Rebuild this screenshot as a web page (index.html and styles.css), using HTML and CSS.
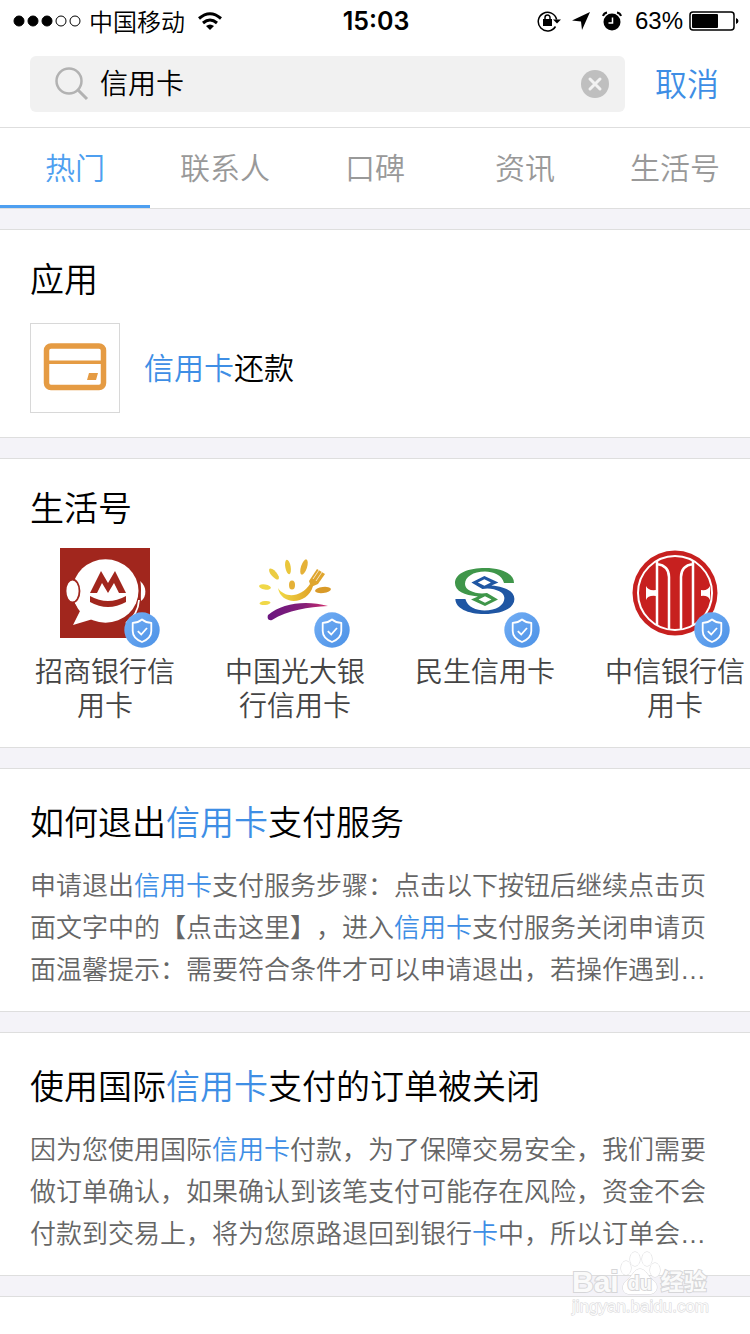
FILE: index.html
```html
<!DOCTYPE html>
<html lang="zh-CN">
<head>
<meta charset="utf-8">
<meta name="viewport" content="width=device-width">
<title>信用卡</title>
<link rel="stylesheet" href="styles.css">
</head>
<body>
<svg class="defs" aria-hidden="true">
  <defs>
    <linearGradient id="blue" x1="0" y1="0" x2="1" y2="1"><stop offset="0" stop-color="#72aef5"/><stop offset="1" stop-color="#4d92e6"/></linearGradient>
    <symbol id="shield" viewBox="0 0 36 36">
      <circle cx="18" cy="18" r="17.7" fill="url(#blue)"/>
      <path d="M18 7.5C21 10 24 10.8 27.3 10.8V19C27.3 24.500 23 28 18 30C13 28 8.700 24.500 8.700 19V10.800C12 10.800 15 10 18 7.500Z" fill="none" stroke="#fff" stroke-width="1.800" stroke-linejoin="round"/>
      <path d="M13.800 19.200L17.200 22.500L23 16" fill="none" stroke="#fff" stroke-width="1.800"/>
    </symbol>
  </defs>
</svg>

<header class="status">
  <div class="status-side">
    <svg width="68" height="12" viewBox="0 0 68 12"><g stroke="#000"><circle cx="6" cy="6" r="5"/><circle cx="20" cy="6" r="5"/><circle cx="34" cy="6" r="5"/><circle cx="48" cy="6" r="5" fill="none"/><circle cx="62" cy="6" r="5" fill="none"/></g></svg>
    <span class="carrier">中国移动</span>
    <svg class="wifi" width="26" height="20" viewBox="0 0 26 20"><g fill="none" stroke="#000" stroke-width="3"><path d="M2 7.500Q13-2 24 7.500"/><path d="M6 12Q13 6 20 12"/></g><path d="M9 15Q13 12 17 15L13 19Z"/></svg>
  </div>
  <time class="clock">15:03</time>
  <div class="status-side status-right">
    <svg width="24" height="22" viewBox="0 0 24 22"><path d="M18.500 16.500A9.300 9.300 0 1 1 19.600 9.500" fill="none" stroke="#000" stroke-width="1.500"/><path d="M16 9.500H24L20 13.500Z"/><rect x="6" y="9" width="9" height="7"/><path d="M8 9V7.500a2.500 2.500 0 0 1 5 0V9" fill="none" stroke="#000" stroke-width="1.500"/></svg>
    <svg class="arrow" width="20" height="20" viewBox="0 0 20 20"><path d="M19 1L1 9.500L10 10.500L11 19Z"/></svg>
    <svg class="alarm" width="20" height="20" viewBox="0 0 20 20"><circle cx="10" cy="11" r="8.500"/><path d="M1 5Q2 2 5 1.500M19 5Q18 2 15 1.500" fill="none" stroke="#000" stroke-width="2"/><path d="M10.500 6.500V12H6.500" fill="none" stroke="#fff" stroke-width="1.500"/></svg>
    <span class="percent">63%</span>
    <svg width="50" height="20" viewBox="0 0 50 20"><rect x="1" y="1" width="44" height="18" rx="3" fill="none" stroke="#000" stroke-width="1.500"/><rect x="3" y="3" width="26" height="14" rx="1"/><path d="M47 7Q49.500 8 49.500 10T47 13Z"/></svg>
  </div>
</header>

<form class="search">
  <div class="search-box">
    <svg width="34" height="34" viewBox="0 0 34 34" fill="none" stroke="#b2b2b2"><circle cx="14" cy="14" r="12.500" stroke-width="2.500"/><path d="M23 23L32 32" stroke-width="3"/></svg>
    <input class="search-input" type="text" value="信用卡" aria-label="搜索">
    <button class="clear" type="button" aria-label="清除"><svg width="28" height="28" viewBox="0 0 28 28"><circle cx="14" cy="14" r="14" fill="#bfbfbf"/><path d="M9 9L19 19M19 9L9 19" stroke="#f2f2f2" stroke-width="3" stroke-linecap="round"/></svg></button>
  </div>
  <button class="cancel" type="button">取消</button>
</form>

<nav class="tabs">
  <button class="tab active" type="button">热门</button>
  <button class="tab" type="button">联系人</button>
  <button class="tab" type="button">口碑</button>
  <button class="tab" type="button">资讯</button>
  <button class="tab" type="button">生活号</button>
</nav>

<main class="results">
  <section class="card">
    <h2 class="card-title">应用</h2>
    <a class="app" href="#">
      <span class="app-icon"><svg width="88" height="88" viewBox="0 0 88 88"><rect x="15.500" y="22" width="57" height="41.500" rx="4.500" fill="none" stroke="#e59b43" stroke-width="5.500"/><path d="M15 38.200H73" stroke="#e59b43" stroke-width="3.500"/><path d="M58 49H67L65 56H56Z" fill="#e59b43"/></svg></span>
      <span class="app-name"><mark>信用卡</mark>还款</span>
    </a>
  </section>

  <section class="card accounts-card">
    <h2 class="card-title">生活号</h2>
    <div class="accounts">
      <a class="account" href="#">
        <span class="logo">
          <svg width="90" height="90" viewBox="0 0 90 90"><path fill="#a1261d" d="M0 0H90V90H0Z"/><g fill="#fff"><ellipse cx="45.500" cy="43" rx="33" ry="31.700"/><path d="M14 53L20 63L13 77L33 71Z"/><path d="M80 33C87 38 87 49 81 53Z"/></g><path d="M78.500 29Q82 43 78 54" fill="none" stroke="#a1261d" stroke-width="1.800"/><path d="M79 52Q78 67 66 75" fill="none" stroke="#fff" stroke-width="1.800"/><ellipse cx="12.500" cy="43" rx="7" ry="11.500" fill="#fff" stroke="#a1261d" stroke-width="1.800"/><path fill="#a1261d" d="M30 45L41 23L48 35L55 23L66 45H59L54 35L48 45L42 35L37 45ZM30 48Q48 58 66 48V54Q48 64 30 54Z"/></svg>
          <svg class="badge" width="36" height="36"><use href="#shield"/></svg>
        </span>
        <span class="account-name">招商银行信用卡</span>
      </a>
      <a class="account" href="#">
        <span class="logo">
          <svg width="90" height="90" viewBox="0 0 90 90"><defs><linearGradient id="gold"><stop offset="0" stop-color="#f1da45"/><stop offset="1" stop-color="#dfa127"/></linearGradient><linearGradient id="purple"><stop offset="0" stop-color="#6b1580"/><stop offset=".6" stop-color="#842078"/><stop offset="1" stop-color="#d32c6b"/></linearGradient></defs>
          <g fill="#f0d848"><ellipse cx="15" cy="55" rx="5.500" ry="2" transform="rotate(-6 15 55)"/><ellipse cx="15" cy="39" rx="6" ry="2.500" transform="rotate(10 15 39)"/><ellipse cx="24" cy="26" rx="6.800" ry="2.800" transform="rotate(49 24 26)" fill="#ebcc42"/><ellipse cx="38" cy="19" rx="7.300" ry="2.700" transform="rotate(80 38 19)" fill="#eac63b"/></g><g fill="#e5b137"><ellipse cx="54" cy="19" rx="8" ry="3" transform="rotate(108 54 19)"/><ellipse cx="73" cy="42" rx="8" ry="3" transform="rotate(-7 73 42)" fill="#d99a28"/><ellipse cx="42" cy="37" rx="3" ry="4.500"/></g>
          <path fill="url(#gold)" d="M28 40C35 51 52 49 60 36L63 38C58 57 31 58 28 40Z"/><path fill="#dfa52d" d="M59 33L67 21L75 26L68 36L61 39Z"/><path stroke="#fff" stroke-width=".7" d="M63 31L69 22M66 33L72 24"/><path fill="url(#purple)" d="M18 67C32 55 56 52 78 58C58 59 38 62 22 72C18 73 17 70 18 67Z"/></svg>
          <svg class="badge" width="36" height="36"><use href="#shield"/></svg>
        </span>
        <span class="account-name">中国光大银行信用卡</span>
      </a>
      <a class="account" href="#">
        <span class="logo">
          <svg width="90" height="90" viewBox="0 0 90 90"><defs><path id="half" fill-rule="evenodd" d="M74 35H64C62 27 53 23.500 45 23.500C33 23.500 25 29 25 36C25 42 33 45 42 45.500L47 45L58 51.500L45 58L31 51.500L38 48.500C24 47 15 43 15 35C15 25 29 20 45 20C62 20 74 26 74 35ZM45 48.200L38.500 51.500L45 54.800L51.500 51.500Z"/></defs><use href="#half" fill="#1f56a3" transform="rotate(180 44.700 43)"/><use href="#half" fill="#3f964a"/></svg>
          <svg class="badge" width="36" height="36"><use href="#shield"/></svg>
        </span>
        <span class="account-name">民生信用卡</span>
      </a>
      <a class="account" href="#">
        <span class="logo">
          <svg width="90" height="90" viewBox="0 0 90 90"><circle cx="45" cy="45" r="42.500" fill="#c7201f"/><circle cx="45" cy="45" r="37" fill="none" stroke="#fff" stroke-width="2"/><g fill="none" stroke="#fff" stroke-width="2.500"><path d="M27 13V77M63 13V77M27 16C34 17 39 21 39 29V81M63 16C56 17 51 21 51 29V81"/></g><path fill="#fff" d="M16 38Q18 43 26 42V48Q18 47 16 52ZM80 38Q78 43 71 42V48Q78 47 80 52Z"/></svg>
          <svg class="badge" width="36" height="36"><use href="#shield"/></svg>
        </span>
        <span class="account-name">中信银行信用卡</span>
      </a>
    </div>
  </section>

  <article class="card article">
    <h2 class="card-title">如何退出<mark>信用卡</mark>支付服务</h2>
    <p class="summary">申请退出<mark>信用卡</mark>支付服务步骤：点击以下按钮后继续点击页面文字中的【点击这里】，进入<mark>信用卡</mark>支付服务关闭申请页面温馨提示：需要符合条件才可以申请退出，若操作遇到<span class="more">…</span></p>
  </article>

  <article class="card article">
    <h2 class="card-title">使用国际<mark>信用卡</mark>支付的订单被关闭</h2>
    <p class="summary">因为您使用国际<mark>信用卡</mark>付款，为了保障交易安全，我们需要做订单确认，如果确认到该笔支付可能存在风险，资金不会付款到交易上，将为您原路退回到银行<mark>卡</mark>中，所以订单会<span class="more">…</span></p>
  </article>

  <div class="card next"></div>
</main>

<div class="watermark" aria-hidden="true">
  <div class="wm-brand"><span class="wm-latin">Bai</span>
    <span class="wm-paw"><svg width="42" height="44" viewBox="0 0 42 44" fill="#fff" stroke="#d6d6d8"><ellipse cx="7" cy="17" rx="5" ry="7"/><ellipse cx="16" cy="8" rx="5" ry="7"/><ellipse cx="28" cy="8" rx="5" ry="7"/><ellipse cx="36" cy="19" rx="5" ry="7"/><path d="M21 18C27 18 29 26 35 30C41 36 37 44 29 43H12C4 44 1 36 7 30C13 26 15 18 21 18Z"/></svg><span class="wm-du">du</span></span>
    <span class="wm-cjk">经验</span></div>
  <div class="wm-url">jingyan.baidu.com</div>
</div>
</body>
</html>
```
FILE: styles.css
```css
* { box-sizing: border-box; }

body {
  margin: 0;
  min-height: 100vh;
  position: relative;
  overflow-x: hidden;
  background: #fff;
  color: #000;
  font-family: "Noto Sans CJK SC", sans-serif;
  font-weight: 350;
  text-spacing-trim: space-all;
}

svg { display: block; flex: none; }
.defs { position: absolute; width: 0; height: 0; }
button { padding: 0; border: 0; background: none; font: inherit; }
a { color: inherit; text-decoration: none; }
mark { background: none; color: #3e8ee5; }

.status {
  display: grid;
  grid-template-columns: 1fr auto 1fr;
  align-items: center;
  height: 40px;
  padding: 0 11px 0 13px;
  font-size: 24px;
  line-height: 40px;
}
.status-side { display: flex; align-items: center; gap: 8px; }
.status-right { justify-content: flex-end; gap: 6px; }
.wifi { margin-left: 4px; }
.arrow { margin-left: 4px; }
.alarm { margin: 0 7px 0 5px; }
.clock { padding-top: 1px; font-family: Inter, sans-serif; font-size: 25px; font-weight: 600; }
.percent { font-family: "Liberation Sans", sans-serif; font-weight: 400; }

.search {
  display: flex;
  align-items: center;
  gap: 30px;
  height: 88px;
  padding: 0 31px 0 30px;
  border-bottom: 1px solid #dedede;
}
.search-box {
  display: flex;
  flex: 1;
  align-items: center;
  gap: 11px;
  min-width: 0;
  height: 56px;
  padding: 0 16px 0 25px;
  border-radius: 6px;
  background: #f1f1f1;
}
.search-input {
  flex: 1;
  min-width: 0;
  height: 42px;
  padding: 0 0 4px;
  border: 0;
  outline: 0;
  background: none;
  color: #000;
  font: inherit;
  font-size: 28px;
}
.cancel {
  padding-bottom: 4px;
  color: #3e8ee5;
  font-size: 32px;
  line-height: 48px;
}

.tabs {
  display: grid;
  grid-template-columns: repeat(5, 1fr);
  height: 80px;
}
.tab {
  padding-bottom: 2px;
  border-bottom: 3px solid transparent;
  color: #999;
  font-size: 30px;
  line-height: 74px;
}
.tab.active { border-color: #4e9ff0; color: #4e9ff0; }

.results {
  display: flex;
  flex-direction: column;
  gap: 20px;
  padding-top: 20px;
  border-top: 1px solid #dedede;
  background: #f4f3f8;
}
.card {
  padding: 29px 30px 24px;
  border: solid #dedede;
  border-width: 1px 0;
  background: #fff;
}
.card-title {
  margin: 0;
  padding-bottom: 2px;
  font-size: 34px;
  font-weight: 350;
  line-height: 38px;
}

.app {
  display: flex;
  align-items: center;
  gap: 24px;
  margin-top: 24px;
  font-size: 30px;
}
.app-icon { border: 1px solid #d8d8d8; }
.app-name { padding-bottom: 4px; }

.accounts-card { padding-right: 0; padding-bottom: 26px; }
.accounts {
  display: grid;
  grid-template-columns: repeat(4, 1fr);
  gap: 40px;
  margin-top: 20px;
}
.account {
  display: flex;
  flex-direction: column;
  align-items: center;
  gap: 15px;
}
.logo { position: relative; }
.badge { position: absolute; right: -10px; bottom: -10px; }
.account-name {
  width: 140px;
  color: #444;
  font-size: 28px;
  line-height: 34px;
  text-align: center;
}

.article { padding: 33px 30px 22px; }
.summary {
  margin: 21px 0 0;
  color: #666;
  font-size: 26px;
  line-height: 42px;
}
.more { font-family: "Liberation Sans", sans-serif; line-height: 1; }

.next { height: 38px; padding: 0; border-bottom: 0; }

.watermark {
  position: absolute;
  right: 41px;
  bottom: 18px;
  color: #fafafa;
  font-family: "Liberation Sans", "Noto Sans CJK SC", sans-serif;
  -webkit-text-stroke: 2px #d6d6d8;
  paint-order: stroke fill;
}
.wm-brand { display: flex; align-items: flex-end; line-height: 32px; }
.wm-latin { font-size: 30px; font-weight: 700; }
.wm-paw { position: relative; margin-bottom: 3px; }
.wm-du {
  position: absolute;
  inset: auto 0 0;
  font-size: 20px;
  font-weight: 700;
  line-height: 24px;
  text-align: center;
}
.wm-cjk { font-size: 23px; font-weight: 700; }
.wm-url { font-size: 17px; line-height: 18px; -webkit-text-stroke-width: 1px; }
```
